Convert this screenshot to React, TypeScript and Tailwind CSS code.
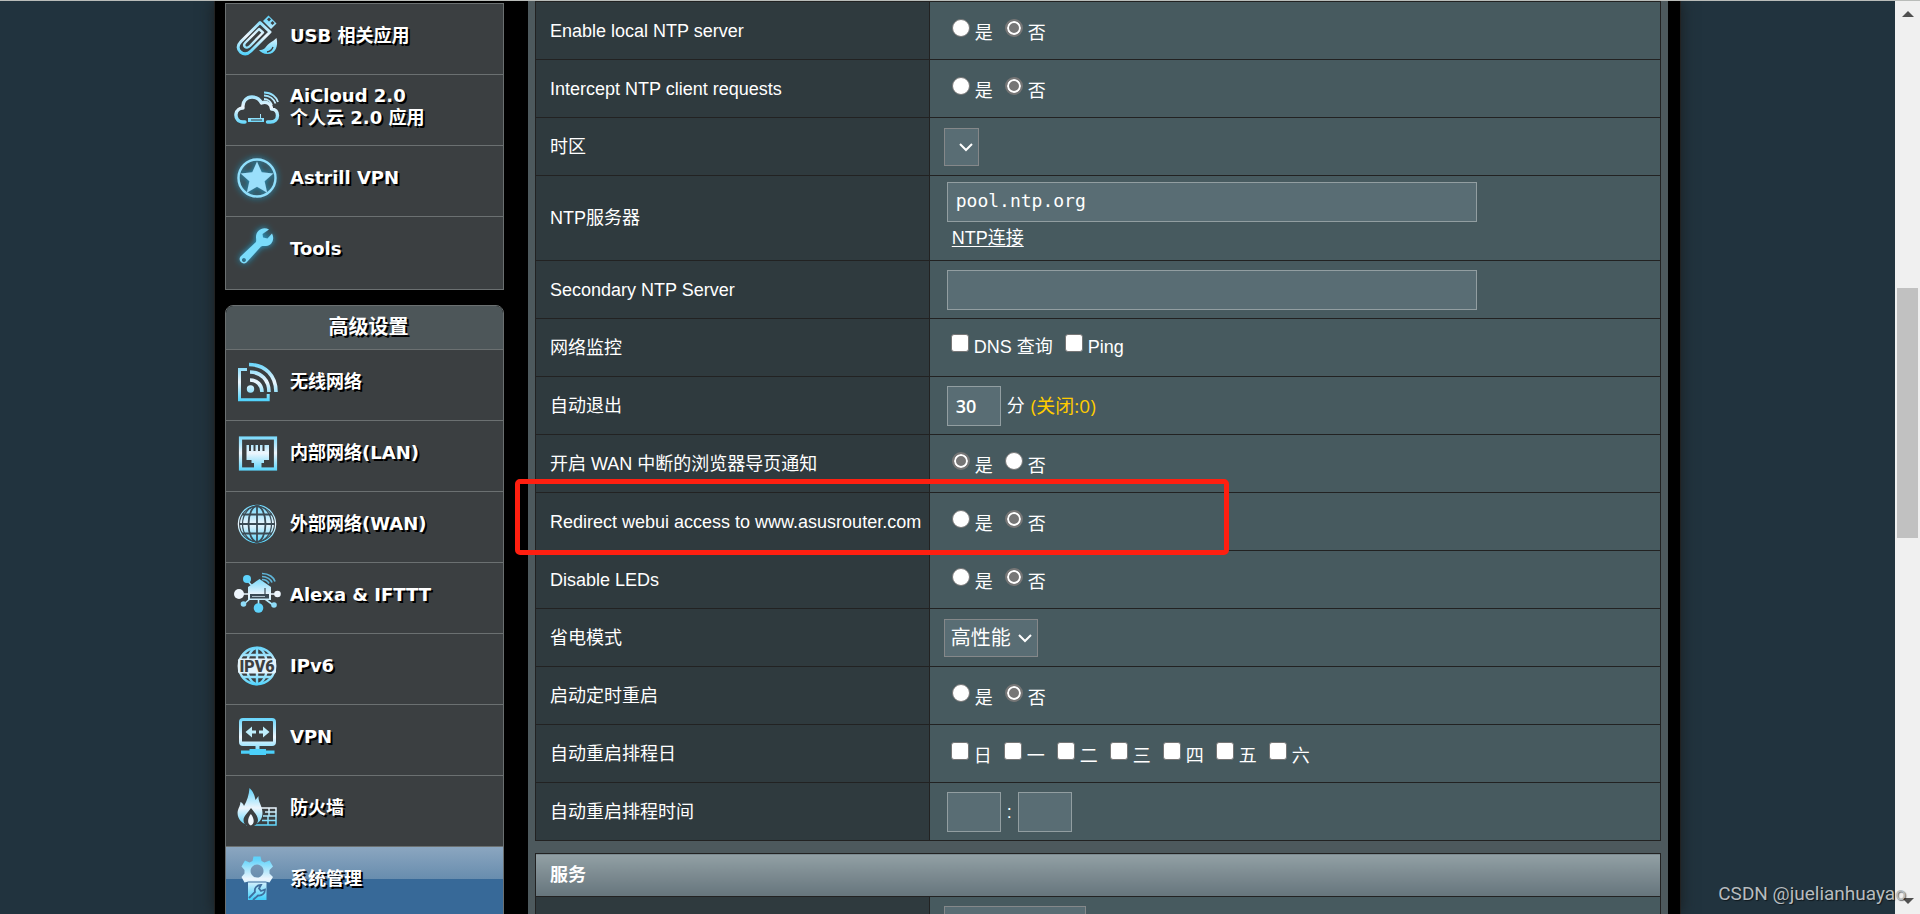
import React from 'react';

// ==================== ICONS ====================
interface IconProps {
  children: React.ReactNode;
}

function MenuIcon({ children }: IconProps) {
  return (
    <svg viewBox="0 0 50 50" className="h-[50px] w-[50px] shrink-0 overflow-visible" fill="none" aria-hidden="true">
      {children}
    </svg>
  );
}

const G = 'url(#ice)';

// Shared gradient and glow for the menu icons
function IconDefs() {
  return (
    <svg className="absolute h-0 w-0" aria-hidden="true">
      <defs>
        <linearGradient id="ice" gradientUnits="userSpaceOnUse" x1="0" y1="5" x2="0" y2="45">
          <stop offset="0" stopColor="#5fd3fb" />
          <stop offset="0.5" stopColor="#eef6fd" />
          <stop offset="1" stopColor="#45d0fb" />
        </linearGradient>
        <filter id="glow" x="-40%" y="-40%" width="180%" height="180%">
          <feDropShadow dx="0" dy="0" stdDeviation="3" floodColor="#1fb6ec" floodOpacity="0.9" />
        </filter>
      </defs>
    </svg>
  );
}

const icons: Record<string, React.ReactNode> = {
  usb: (
    <MenuIcon>
      <path d="M44.500 27c2 8-1 16-9 16-4 0-7-2-8.500-4 5 0 6-2 8.500-5 2-2.500 5-3 9-7z" fill={G} />
      <path d="M41 36c-1 3-3 4.500-6 5" stroke="#3b3f41" strokeWidth="1.300" />
      <path d="M31 10l5.500-5.500 8 8L39 18z" fill={G} />
      <path d="M35 8.500l2-2 2 2-2 2zM38.500 12l2-2 2 2-2 2z" fill="#3b3f41" />
      <path d="M28 11.500L9 30.500c-4 4-3.500 8-.5 10.500 3 2.500 7 2.500 10.500-1l19-19z" fill="#3b3f41" stroke={G} strokeWidth="3" strokeLinejoin="round" />
      <path d="M27 18L13.500 31.500c-2 2-1.500 3.500-.5 4.500s3 1 5-1L31 21.500z" stroke={G} strokeWidth="2.400" strokeLinejoin="round" />
    </MenuIcon>
  ),
  cloud: (
    <MenuIcon>
      <path d="M13 40H11C6 40 3.500 36 4 32c.5-4 4-6 7-6-1-7 4-11 9-11 5 0 8 3 9.500 6 5-2 10 1 10 6 4 0 6 3 6 6.500 0 4-3 6.500-7 6.500h-3" stroke={G} strokeWidth="3.400" strokeLinecap="round" strokeLinejoin="round" />
      <path d="M16 36h16v4H16zM28 32h1v5h-1z" fill={G} />
      <path d="M19 38h11" stroke="#3b3f41" strokeWidth="1" />
      <path d="M32 17c4 0 7 3 8 6M32 13.500c6 0 10 4 11.500 8M32 10.500c8 0 12.500 5 14 9.500" stroke={G} strokeWidth="1.800" />
    </MenuIcon>
  ),
  star: (
    <MenuIcon>
      <g filter="url(#glow)">
        <circle cx="25" cy="25" r="18.500" stroke="#8fdffc" strokeWidth="2.400" />
        <path d="M25 8.500l4.700 10.800 11.700 1.200-8.800 7.800 2.600 11.500L25 33.800l-10.200 6 2.600-11.500-8.800-7.800 11.700-1.200z" fill="#9adffb" />
      </g>
    </MenuIcon>
  ),
  wrench: (
    <MenuIcon>
      <g filter="url(#glow)">
        <path fillRule="evenodd" d="M37 5.500c-6-3.500-13 1-13 7.500 0 2 .5 3 0 5L8.500 32.500c-3 4 2 9 6 6L29 22.500c2-.8 3-.3 5-.5 6-.5 9-7 6-12.500l-4.500 5-4.500-1-.5-3.500zM12 34a2 2 0 1 1-.1 0z" fill="#7adcfb" />
      </g>
    </MenuIcon>
  ),
  wifi: (
    <MenuIcon>
      <path d="M15 12.500H7.500v30.300h28.700V37" stroke={G} strokeWidth="3" />
      <circle cx="18.500" cy="32" r="3.700" fill={G} />
      <path d="M18 23c7 0 12 5 12 12" stroke={G} strokeWidth="3.600" />
      <path d="M18 15c11 0 19 8 19 20" stroke={G} strokeWidth="3.600" />
      <path d="M17 7.500c16 0 27 11 27 27.500" stroke={G} strokeWidth="3.600" />
    </MenuIcon>
  ),
  lan: (
    <MenuIcon>
      <rect x="8.500" y="10" width="35" height="31" stroke={G} strokeWidth="3.200" />
      <path d="M14.500 17h2.500v6h2v-6h2.500v6h2v-6H26v6h2v-6h2.500v6h2v-6H37v15h-5v3h-2.500v5H22v-5h-2.500v-3h-5z" fill={G} />
    </MenuIcon>
  ),
  globe: (
    <MenuIcon>
      <circle cx="25" cy="25" r="18.600" fill="#3b3f41" stroke={G} strokeWidth="1.300" />
      <circle cx="25" cy="25" r="17" fill={G} />
      <g stroke="#3b4b55" strokeWidth="1.800">
        <path d="M25 7v36M7 25h36M10 15.500h30M10 34.500h30" />
        <ellipse cx="25" cy="25" rx="8.500" ry="18" />
        <ellipse cx="25" cy="25" rx="14.500" ry="18" strokeWidth="1.200" />
      </g>
    </MenuIcon>
  ),
  alexa: (
    <MenuIcon>
      <path d="M7 24h36M14 9l7 8M12 34l7-6M41 35l-8-6M26.500 30v8" stroke={G} strokeWidth="1.600" />
      <path d="M16 17l11.500-8L39 17v13H16z" fill={G} />
      <path d="M18 24h19v4.500H18z" fill="#3b4b55" />
      <path d="M33 18v7" stroke="#3b4b55" strokeWidth="1.200" />
      <path d="M20 26.500h13" stroke="#aebfca" />
      <circle cx="15" cy="9" r="4" fill="#5fd3fb" />
      <circle cx="7" cy="24" r="5" fill="#eef6fd" />
      <circle cx="45.500" cy="24" r="3.300" fill="#eef6fd" />
      <circle cx="11.500" cy="34" r="2.800" fill="#8fdcf8" />
      <circle cx="42" cy="35" r="2.800" fill="#8fdcf8" />
      <circle cx="26.500" cy="38" r="4.800" fill="#5fd3fb" />
      <path d="M30 9.500c4 0 6 2 7 4M30 6.500c5 0 9 3 10 6M30 3.500c7 0 12 4 13 8" stroke="#5fb5d8" strokeWidth="1.700" />
    </MenuIcon>
  ),
  ipv6: (
    <MenuIcon>
      <g stroke={G} strokeWidth="2.400">
        <circle cx="25" cy="25" r="18.200" />
        <path d="M25 7v36M10 14h30M10 36h30" />
        <ellipse cx="25" cy="25" rx="10" ry="18" />
      </g>
      <rect x="6" y="17.500" width="38" height="15" rx="2" fill="#e2f2fb" />
      <text x="25" y="31" textAnchor="middle" fontFamily="Roboto, sans-serif" fontSize="16" fontWeight="900" fill="#3b3f41">
        IPV6
      </text>
    </MenuIcon>
  ),
  vpn: (
    <MenuIcon>
      <rect x="8.500" y="7.500" width="34" height="25" rx="2.500" stroke={G} strokeWidth="3" />
      <path d="M8 29.500h35V32H8zM23.500 33h4v5h-4z" fill={G} />
      <path d="M13.500 20l6.500-5.500v4h4v3h-4v4zM37.500 20L31 14.500v4h-4v3h4v4z" fill="#bfeefc" />
      <path d="M9 38.500h8.500V37H34v1.500h8.500v3.200H34V43H17.500v-1.300H9z" fill="#4bd0fa" />
    </MenuIcon>
  ),
  firewall: (
    <MenuIcon>
      <path d="M29 25h15v17H14M44 33H31M37 25v8M33 29h11M36 33v9M30 37.500h14" stroke={G} strokeWidth="1.500" />
      <path d="M17 42.500C9 41 4 34 6 27c1-3 2-4 2.500-8 2 1 3 2 3.500 4 3-5 5-11 5.500-18 4 4 5 7 6 12l3-4c-.5 6 4 10 4 17 0 6-4 11-9 12z" fill={G} />
      <path d="M19 25c3 4 7 8 7 12 0 3-2 5-4 6h-7c-2-1-3.500-3-3.500-6 0-4 5-8 7.500-12z" fill="#3b3f41" />
      <path d="M18.800 31c4 5 3.700 10 0 11.500-3.700-1.500-3.500-7 0-11.500z" fill="#eef6fd" />
    </MenuIcon>
  ),
  admin: (
    <MenuIcon>
      <path
        fillRule="evenodd"
        d="M21.500 2.500h7l1 4.500 3 1.500 5-2 3.500 6-3.500 3.500v3.500l3.500 3.500-3.500 5.500-4-1h-17l-4 1L9.500 23l3-3.500V16L9.500 12.500l3.500-6 4.500 2L20.500 7zM25 10.500a6.500 6.500 0 1 0 .1 0z"
        fill={G}
      />
      <path d="M16 28.500h18.500v17.500H16z" fill={G} />
      <path d="M17 44l6-6c-1-4 2-7 6-7l-2 3.500 2 2.500 4-1.500c0 4-3 6.500-7 6L21 46" stroke="#3f6f9d" strokeWidth="1.800" />
    </MenuIcon>
  ),
};

// ==================== SIDEBAR ====================
interface MenuEntry {
  icon: string;
  lines: string[];
  active?: boolean;
}

const generalMenu: MenuEntry[] = [
  { icon: 'usb', lines: ['USB 相关应用'] },
  { icon: 'cloud', lines: ['AiCloud 2.0', '个人云 2.0 应用'] },
  { icon: 'star', lines: ['Astrill VPN'] },
  { icon: 'wrench', lines: ['Tools'] },
];

const advancedMenu: MenuEntry[] = [
  { icon: 'wifi', lines: ['无线网络'] },
  { icon: 'lan', lines: ['内部网络(LAN)'] },
  { icon: 'globe', lines: ['外部网络(WAN)'] },
  { icon: 'alexa', lines: ['Alexa & IFTTT'] },
  { icon: 'ipv6', lines: ['IPv6'] },
  { icon: 'vpn', lines: ['VPN'] },
  { icon: 'firewall', lines: ['防火墙'] },
  { icon: 'admin', lines: ['系统管理'], active: true },
];

function MenuItem({ icon, lines, active }: MenuEntry) {
  return (
    <a
      href="#"
      className={`flex h-[71px] items-center gap-2 border-t border-[#6b7071] pb-[6px] pl-[6px] ${
        active ? 'bg-[linear-gradient(#8ba6c0_0px,#688dae_32px,#376998_32px,#376998_71px)]' : 'bg-[#3b3f41]'
      }`}
    >
      {icons[icon]}
      <span className="flex flex-col text-lg leading-[22px] font-bold text-white [text-shadow:2px_2px_0_#000]">
        {lines.map((line) => (
          <span key={line}>{line}</span>
        ))}
      </span>
    </a>
  );
}

function Sidebar() {
  return (
    <nav className="w-[279px] shrink-0 pt-[2px] font-['Verdana','DejaVu_Sans','Noto_Sans_CJK_SC',sans-serif]">
      <div className="border-x border-b border-[#6b7071] bg-[#3b3f41] pb-[2px]">
        {generalMenu.map((entry) => (
          <MenuItem key={entry.icon} {...entry} />
        ))}
      </div>
      <div className="mt-[15px] overflow-hidden rounded-t-lg border border-[#6b7071]">
        <h2 className="bg-[#4d5659] py-2 pl-2 text-center text-xl leading-[27px] font-bold text-white [text-shadow:2px_2px_0_#000]">
          高级设置
        </h2>
        {advancedMenu.map((entry) => (
          <MenuItem key={entry.icon} {...entry} />
        ))}
      </div>
    </nav>
  );
}

// ==================== FORM CONTROLS ====================
const fieldClass = 'h-10 border border-[#929ea1] bg-[#596d74] px-2 text-lg text-white outline-none';

interface YesNoProps {
  name: string;
  label: string;
  value: 'yes' | 'no';
}

function YesNo({ name, label, value }: YesNoProps) {
  const radioClass =
    'h-[18px] w-[18px] appearance-none rounded-full border border-[#767676] bg-white checked:border-2 checked:bg-[#767676] checked:shadow-[inset_0_0_0_2px_#fff]';
  return (
    <div role="radiogroup" aria-label={label} className="flex gap-3 pl-2">
      <label className="flex gap-[5px]">
        <input type="radio" name={name} defaultChecked={value === 'yes'} className={radioClass} />
        <span className="pt-1 leading-5">是</span>
      </label>
      <label className="flex gap-[5px]">
        <input type="radio" name={name} defaultChecked={value === 'no'} className={radioClass} />
        <span className="pt-1 leading-5">否</span>
      </label>
    </div>
  );
}

const checkClass = 'h-[18px] w-[18px] shrink-0 appearance-none rounded-[3px] border border-[#767676] bg-white checked:bg-[#0075ff]';

interface DropDownProps {
  label: string;
  option: string;
  className: string;
}

function DropDown({ label, option, className }: DropDownProps) {
  return (
    <div className={`relative h-[38px] ${className}`}>
      <select
        aria-label={label}
        className="h-full w-full appearance-none border border-[#85888a] bg-[#596d74] px-[6px] text-xl text-white outline-none"
      >
        <option>{option}</option>
      </select>
      <svg viewBox="0 0 14 9" className="pointer-events-none absolute top-[15px] right-[6px] h-[9px] w-[14px]" fill="none" aria-hidden="true">
        <path d="M1 1l6 6 6-6" stroke="#fff" strokeWidth="2" />
      </svg>
    </div>
  );
}

// ==================== SETTINGS TABLE ====================
interface RowProps {
  label: string;
  tall?: boolean;
  children?: React.ReactNode;
}

function Row({ label, tall, children }: RowProps) {
  return (
    <tr className={tall ? 'h-[85px]' : 'h-[58px]'}>
      <th scope="row" className="w-[35%] border border-[#222] bg-[#2f3a3e] pl-[14px] text-left font-normal whitespace-nowrap">
        {label}
      </th>
      <td className="border border-[#222] bg-[#475a5f] pl-[14px]">{children}</td>
    </tr>
  );
}

const weekdays = ['日', '一', '二', '三', '四', '五', '六'];

function SettingsTable() {
  return (
    <table className="w-full border-collapse">
      <tbody>
        <Row label="Enable local NTP server">
          <YesNo name="ntpd_enable" label="Enable local NTP server" value="no" />
        </Row>
        <Row label="Intercept NTP client requests">
          <YesNo name="ntpd_redir" label="Intercept NTP client requests" value="no" />
        </Row>
        <Row label="时区">
          <DropDown label="时区" option="" className="w-[35px]" />
        </Row>
        <Row label="NTP服务器" tall>
          <div className="flex flex-col items-start gap-1 pb-1 pl-[3px]">
            <input
              aria-label="NTP服务器"
              defaultValue="pool.ntp.org"
              className={`${fieldClass} w-[530px] font-['DejaVu_Sans_Mono',monospace] pb-[3px]`}
            />
            <a href="#" className="ml-[5px] leading-6 underline underline-offset-2">
              NTP连接
            </a>
          </div>
        </Row>
        <Row label="Secondary NTP Server">
          <div className="pl-[3px]">
            <input aria-label="Secondary NTP Server" className={`${fieldClass} block w-[530px]`} />
          </div>
        </Row>
        <Row label="网络监控">
          <div className="flex gap-3 pb-1 pl-[7px]">
            <label className="flex gap-[5px]">
              <input type="checkbox" className={checkClass} />
              <span className="pt-[3px] leading-5">DNS 查询</span>
            </label>
            <label className="flex gap-[5px]">
              <input type="checkbox" className={checkClass} />
              <span className="pt-[3px] leading-5">Ping</span>
            </label>
          </div>
        </Row>
        <Row label="自动退出">
          <div className="flex items-center gap-[6px] pl-[3px]">
            <input
              aria-label="自动退出"
              defaultValue="30"
              className={`${fieldClass} w-[54px] font-['Open_Sans',sans-serif] font-semibold`}
            />
            <span>分</span>
            <span className="font-['Open_Sans','Noto_Sans_CJK_SC',sans-serif] text-[19px] leading-6 text-[#fc0]">(关闭:0)</span>
          </div>
        </Row>
        <Row label="开启 WAN 中断的浏览器导页通知">
          <YesNo name="nat_redirect" label="开启 WAN 中断的浏览器导页通知" value="yes" />
        </Row>
        <Row label="Redirect webui access to www.asusrouter.com">
          <YesNo name="redirect_dname" label="Redirect webui access to www.asusrouter.com" value="no" />
        </Row>
        <Row label="Disable LEDs">
          <YesNo name="led_disable" label="Disable LEDs" value="no" />
        </Row>
        <Row label="省电模式">
          <DropDown label="省电模式" option="高性能" className="w-[94px]" />
        </Row>
        <Row label="启动定时重启">
          <YesNo name="reboot_schedule" label="启动定时重启" value="no" />
        </Row>
        <Row label="自动重启排程日">
          <div className="flex gap-3 pl-[7px]">
            {weekdays.map((day) => (
              <label key={day} className="flex gap-[5px]">
                <input type="checkbox" className={checkClass} />
                <span className="pt-1 leading-5">{day}</span>
              </label>
            ))}
          </div>
        </Row>
        <Row label="自动重启排程时间">
          <div className="flex items-center gap-[6px] pl-[3px]">
            <input aria-label="自动重启排程时间 (时)" className={`${fieldClass} w-[54px]`} />
            <span>:</span>
            <input aria-label="自动重启排程时间 (分)" className={`${fieldClass} w-[54px]`} />
          </div>
        </Row>
      </tbody>
    </table>
  );
}

function ServiceTable() {
  return (
    <table className="mt-3 w-full border-collapse">
      <thead>
        <tr className="h-[43px]">
          <th colSpan={2} className="border border-[#222] bg-linear-to-b from-[#92a0a5] to-[#66757c] pl-[14px] text-left font-bold">
            服务
          </th>
        </tr>
      </thead>
      <tbody>
        <Row label="">
          <div className="h-10 w-[142px] border border-[#85888a] bg-[#596d74]" />
        </Row>
      </tbody>
    </table>
  );
}

// ==================== SCROLLBAR ====================
function ScrollTrack() {
  return (
    <div className="flex w-[25px] shrink-0 flex-col items-center justify-between bg-[#f0f0f0] py-[10px]" aria-hidden="true">
      <svg viewBox="0 0 12 6" className="h-[6px] w-[12px]">
        <path d="M0 6l6-6 6 6z" fill="#505050" />
      </svg>
      <div className="mb-[90px] h-[250px] w-[21px] bg-[#c1c1c1]" />
      <svg viewBox="0 0 12 6" className="h-[6px] w-[12px]">
        <path d="M0 0l6 6 6-6z" fill="#505050" />
      </svg>
    </div>
  );
}

export default function App() {
  return (
    <div className="relative flex h-screen overflow-hidden border-t border-[#b9bcb9] bg-[#21333e] font-['Liberation_Sans','Noto_Sans_CJK_SC',sans-serif] text-lg text-white">
      <IconDefs />
      <div className="min-w-0 flex-1">
        <div className="mx-auto flex h-full w-full max-w-[1467px] justify-between border-x border-[#222] bg-black pr-3 pl-[10px] shadow-[0_0_14px_#1a1e20]">
          <Sidebar />
          <main className="ml-6 min-w-0 flex-1 bg-[#4d595d] px-[7px]">
            <div className="relative">
              <SettingsTable />
              {/* Highlight around the redirect option */}
              <div className="pointer-events-none absolute top-[478px] -left-5 h-[76px] w-[714px] rounded-[5px] border-[5px] border-[#ff1f10]" />
            </div>
            <ServiceTable />
          </main>
        </div>
      </div>
      <ScrollTrack />
      <div className="pointer-events-none absolute right-[14px] bottom-[8px] text-[19px] leading-6 text-[#b7bcbf] font-['Roboto',sans-serif] [text-shadow:1px_1px_1px_#0008]">
        CSDN @juelianhuayao
      </div>
    </div>
  );
}
